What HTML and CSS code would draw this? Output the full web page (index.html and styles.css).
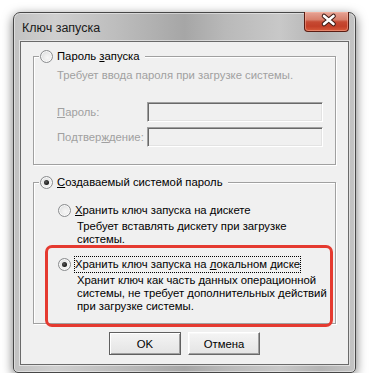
FILE: index.html
```html
<!DOCTYPE html>
<html lang="ru">
<head>
<meta charset="utf-8">
<title>Ключ запуска</title>
<link rel="stylesheet" href="styles.css">
</head>
<body>
<div class="window">
  <div class="titlebar">
    <span class="title">Ключ запуска</span>
    <div class="close">
      <svg width="45" height="20" viewBox="0 0 45 20">
        <path d="M20 5 L29.5 13 M29.5 5 L20 13" stroke="#3b1812" stroke-width="4.6" stroke-linecap="round" fill="none"/>
        <path d="M20 5 L29.5 13 M29.5 5 L20 13" stroke="#ffffff" stroke-width="2.6" stroke-linecap="round" fill="none"/>
      </svg>
    </div>
  </div>
  <div class="client">
    <fieldset class="group g1">
      <legend class="legend"><span class="radio"></span><span class="label">Пароль <u>з</u>апуска</span></legend>
      <div class="body1">
        <p class="desc disabled">Требует ввода пароля при загрузке системы.</p>
        <div class="field first"><span class="flabel disabled"><u>П</u>ароль:</span><span class="edit"></span></div>
        <div class="field"><span class="flabel disabled">Подтвер<u>ж</u>дение:</span><span class="edit"></span></div>
      </div>
    </fieldset>
    <fieldset class="group g2">
      <legend class="legend"><span class="radio checked"></span><span class="label"><u>С</u>оздаваемый системой пароль</span></legend>
      <div class="body2">
        <div class="option"><span class="radio"></span><span class="label"><u>Х</u>ранить ключ запуска на дискете</span></div>
        <p class="desc sub">Требует вставлять дискету при загрузке<br>системы.</p>
        <div class="option opt3"><span class="radio checked"></span><span class="label focus">Хранить ключ запуска на <u>л</u>окальном диске</span></div>
        <p class="desc sub d3">Хранит ключ как часть данных операционной<br>системы, не требует дополнительных действий<br>при загрузке системы.</p>
      </div>
    </fieldset>
    <div class="buttons">
      <button class="btn default">OK</button>
      <button class="btn">Отмена</button>
    </div>
    <div class="highlight"></div>
  </div>
</div>
</body>
</html>
```

FILE: styles.css
```css
html, body {
  margin: 0;
  background: #ffffff;
}
body {
  font-family: "Liberation Sans", Arial, sans-serif;
  font-size: 11.3px;
  color: #000;
}
.window {
  margin: 12px 0 0 13px;
  width: 343px;
  height: 361px;
  box-sizing: border-box;
  border: 1px solid #474747;
  border-radius: 7px 7px 5px 5px;
  padding: 0 6px 7px 6px;
  display: flex;
  flex-direction: column;
  background:
    linear-gradient(90deg, #c2c2c2 0%, #cfcfcf 12%, #bdbdbd 30%, #a6a6a6 50%, #b9b9b9 62%, #c8c8c8 78%, #b4b4b4 90%, #c4c4c4 100%);
  box-shadow: 0 3px 11px rgba(0, 0, 0, 0.55), inset 0 0 0 1px rgba(255, 255, 255, 0.45);
}
.titlebar {
  height: 28px;
  display: flex;
  justify-content: space-between;
  align-items: flex-start;
  flex: none;
}
.title {
  padding: 8px 0 0 2px;
  font-size: 12.5px;
  line-height: 15px;
  color: #1a1a1a;
}
.close {
  margin-top: -1px;
  width: 45px;
  height: 20px;
  box-sizing: border-box;
  border: 1px solid #5a1c12;
  border-top: none;
  border-radius: 0 0 4px 4px;
  background: linear-gradient(180deg, #e6a496 0%, #d8806c 40%, #c64a33 52%, #c23f28 75%, #d75a3a 100%);
  box-shadow: inset 0 0 0 1px rgba(255, 190, 170, 0.45);
}
.close svg {
  display: block;
  margin: -1px 0 0 -1px;
}
.client {
  flex: 1;
  position: relative;
  background: #f0f0f0;
  border: 1px solid #6a6a6a;
  box-shadow: 0 0 0 1px rgba(255, 255, 255, 0.5);
  padding-top: 7px;
  display: flex;
  flex-direction: column;
}
.group {
  margin: 0 12px;
  padding: 0;
  min-inline-size: 0;
  border: 1px solid #a0a0a0;
  box-shadow: inset 1px 1px 0 #ffffff, 1px 1px 0 #ffffff;
}
.legend {
  margin-left: 5px;
  padding: 0 5px 0 1px;
  display: flex;
  align-items: center;
  gap: 4px;
  height: 14px;
  line-height: 14px;
  background: #f0f0f0;
}
.radio {
  flex: none;
  width: 13px;
  height: 13px;
  box-sizing: border-box;
  border-radius: 50%;
  border: 1px solid #8a8c8e;
  background: radial-gradient(circle at 60% 60%, #f7f7f7 0%, #ececec 40%, #cfd1d3 100%);
  box-shadow: inset 0 0 0 1px rgba(255, 255, 255, 0.8);
  position: relative;
}
.radio.checked::after {
  content: "";
  position: absolute;
  left: 3px;
  top: 3px;
  width: 5px;
  height: 5px;
  border-radius: 50%;
  background: radial-gradient(circle at 40% 40%, #5a5a5a 0%, #141414 70%);
}
u {
  text-decoration: underline;
  text-underline-offset: 1px;
}
.desc {
  margin: 0;
  line-height: 13px;
  white-space: nowrap;
}
.disabled {
  color: #a0a0a0;
}
.body1 {
  padding: 6px 12px 17px 23px;
}
.field {
  display: flex;
  align-items: center;
  margin-top: 5px;
}
.field.first {
  margin-top: 20px;
}
.flabel {
  width: 90px;
  line-height: 13px;
}
.edit {
  width: 176px;
  height: 20px;
  box-sizing: border-box;
  border: 1px solid;
  border-color: #a0a0a0 #ffffff #ffffff #a0a0a0;
  box-shadow: inset 1px 1px 0 #696969, inset -1px -1px 0 #e3e3e3;
  background: #f0f0f0;
}
.g2 {
  margin-top: 10px;
}
.body2 {
  padding: 13px 12px 10px 24px;
}
.option {
  display: flex;
  align-items: center;
  gap: 4px;
  line-height: 14px;
}
.option .label {
  padding: 1px 0 1px 0;
  border: 1px dotted transparent;
  margin-left: -1px;
  line-height: 13px;
  white-space: nowrap;
}
.option .label.focus {
  border-color: #000;
}
.opt3 {
  margin-top: 10px;
}
.desc.sub {
  margin: 0 0 0 19px;
}
.option + .desc.sub {
  margin-top: 1px;
}
.desc.d3 {
  margin-top: 3px;
}
.buttons {
  display: flex;
  justify-content: center;
  gap: 7px;
  margin-top: 8px;
}
.btn {
  width: 72px;
  height: 23px;
  margin: 0;
  padding: 0;
  font-family: "Liberation Sans", Arial, sans-serif;
  font-size: 11.3px;
  font-weight: normal;
  color: #000;
  background: linear-gradient(180deg, #f4f4f4 0%, #ececec 50%, #e4e4e4 100%);
  border: 1px solid;
  border-color: #ffffff #696969 #696969 #ffffff;
  box-shadow: inset -1px -1px 0 #a0a0a0, inset 1px 1px 0 #f8f8f8;
}
.btn.default {
  border-color: #5f5f5f;
  box-shadow: inset 1px 1px 0 #ffffff, inset -1px -1px 0 #a0a0a0;
}
.highlight {
  position: absolute;
  left: 24px;
  top: 203px;
  width: 288px;
  height: 82px;
  box-sizing: border-box;
  border: 3px solid #e53a30;
  border-radius: 7px;
  pointer-events: none;
}
```
